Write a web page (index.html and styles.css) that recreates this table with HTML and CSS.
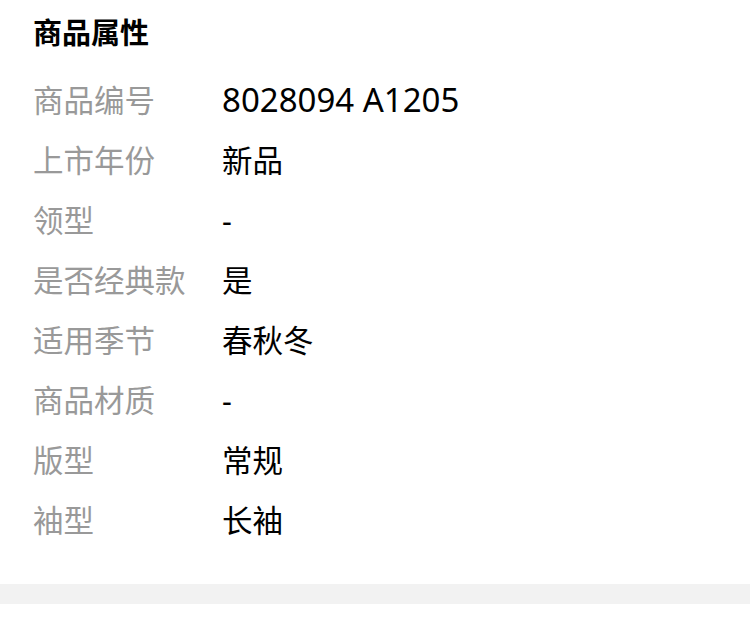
FILE: index.html
```html
<!DOCTYPE html>
<html lang="zh-CN">
<head>
  <meta charset="UTF-8">
  <meta name="viewport" content="width=device-width, initial-scale=1.0">
  <title>商品属性</title>
  <link rel="stylesheet" href="styles.css">
</head>
<body>
  <section class="attrs">
    <h2 class="attrs-title">商品属性</h2>
    <div class="attr-list">
      <div class="attr-row"><span class="attr-label">商品编号</span><span class="attr-value attr-num">8028094 A1205</span></div>
      <div class="attr-row"><span class="attr-label">上市年份</span><span class="attr-value">新品</span></div>
      <div class="attr-row"><span class="attr-label">领型</span><span class="attr-value">-</span></div>
      <div class="attr-row"><span class="attr-label">是否经典款</span><span class="attr-value">是</span></div>
      <div class="attr-row"><span class="attr-label">适用季节</span><span class="attr-value">春秋冬</span></div>
      <div class="attr-row"><span class="attr-label">商品材质</span><span class="attr-value">-</span></div>
      <div class="attr-row"><span class="attr-label">版型</span><span class="attr-value">常规</span></div>
      <div class="attr-row"><span class="attr-label">袖型</span><span class="attr-value">长袖</span></div>
    </div>
  </section>
  <div class="divider"></div>
</body>
</html>
```

FILE: styles.css
```css
* { margin: 0; padding: 0; box-sizing: border-box; }
body {
  background: #fff;
  color: #000;
  font-family: "Noto Sans", "Noto Sans CJK SC", sans-serif;
}
.attrs {
  padding: 3px 33px 34px;
}
.attrs-title {
  font-size: 29px;
  font-weight: bold;
  line-height: 60px;
  margin-bottom: 7px;
  color: #000;
}
.attr-row {
  display: grid;
  grid-template-columns: 189px 1fr;
  height: 60px;
  align-items: center;
  font-size: 30.5px;
  line-height: 60px;
}
.attr-label { color: #999; }
.attr-value { color: #000; }
.attr-num { font-size: 33px; }
.divider {
  height: 20px;
  background: #f2f2f2;
}
```
